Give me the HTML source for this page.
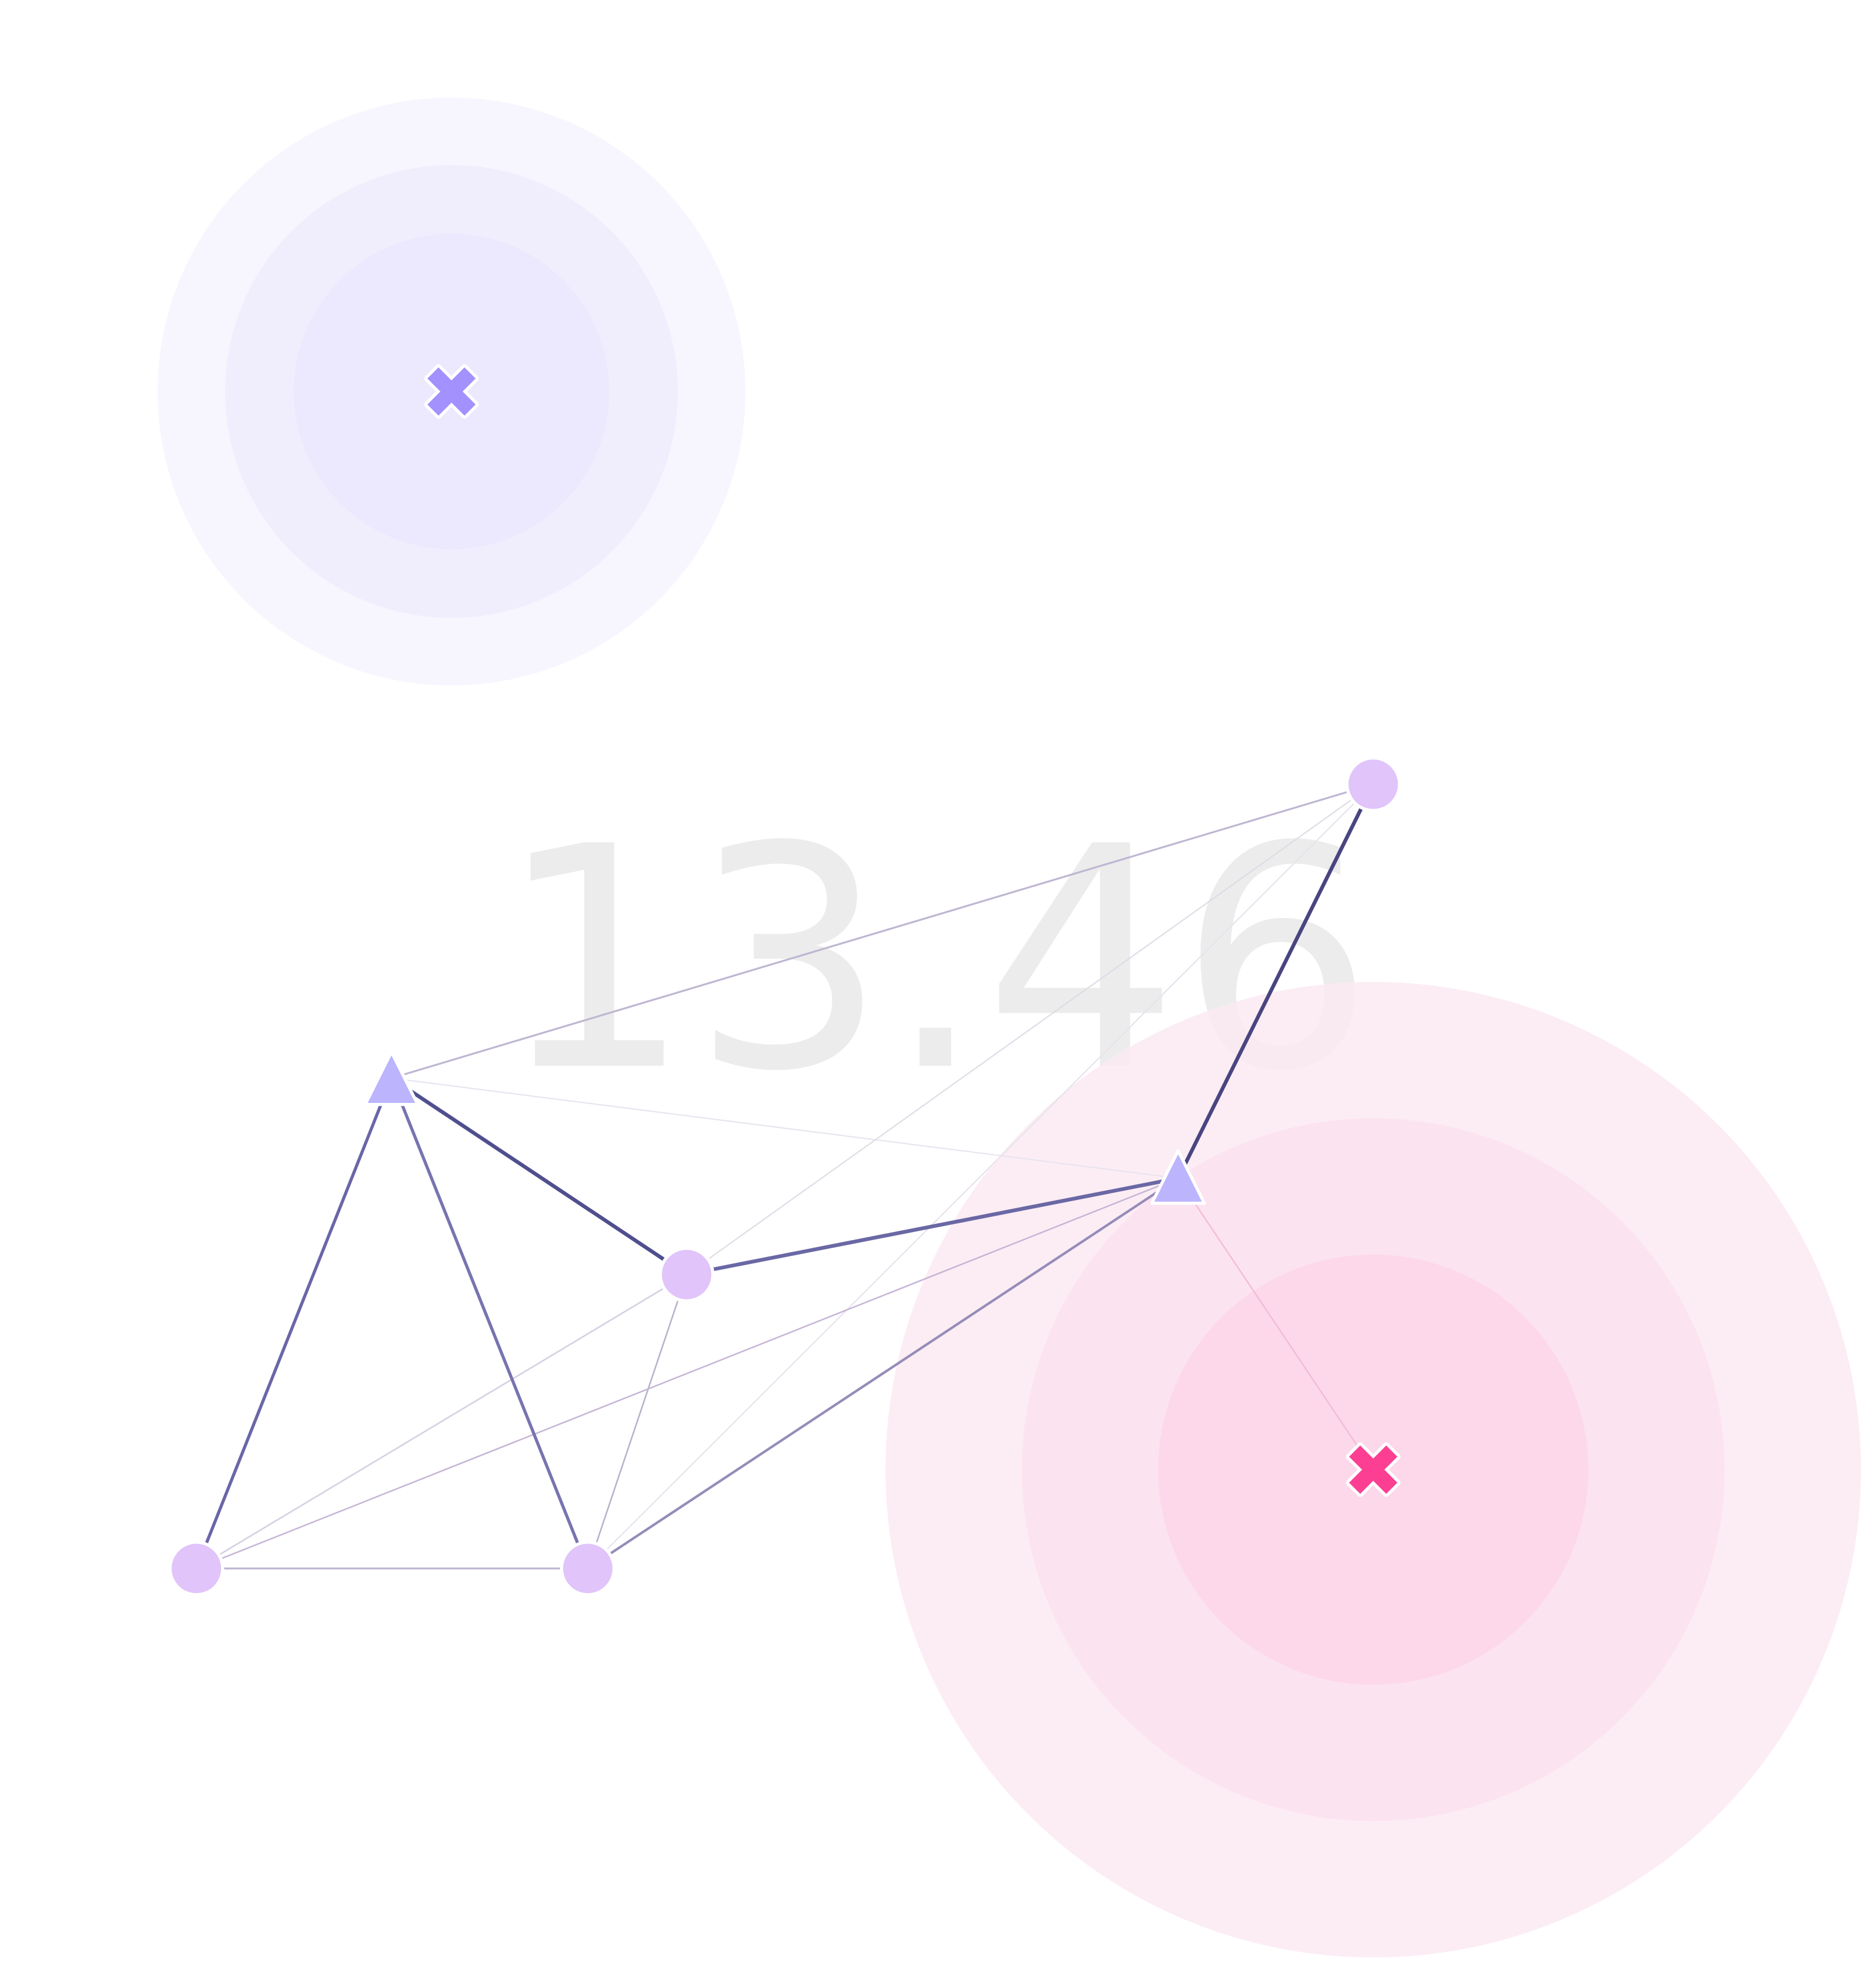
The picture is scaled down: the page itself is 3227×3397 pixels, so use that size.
<!DOCTYPE html>
<html><head><meta charset="utf-8"><style>html,body{margin:0;padding:0;background:#fff;}svg{display:block;}</style></head>
<body>
<svg width="3227" height="3397" viewBox="0 0 1500 1579" xmlns="http://www.w3.org/2000/svg">
<rect width="1500" height="1579" fill="#fff"/>
<circle cx="361" cy="313" r="235" fill="#f7f5fe"/>
<circle cx="361" cy="313" r="181" fill="#f0edfd"/>
<circle cx="361" cy="313" r="126" fill="#ece8fd"/>
<text x="748" y="852" text-anchor="middle" font-family="DejaVu Sans, sans-serif" font-size="245" fill="#ececec">13.46</text>
<circle cx="1098" cy="1175" r="390" fill="#fbeaf3" fill-opacity="0.85"/>
<circle cx="1098" cy="1175" r="281" fill="#fce3f0"/>
<circle cx="1098" cy="1175" r="172" fill="#fcd8ea"/>
<g fill="none" stroke-linecap="round">
<line x1="942" y1="942" x2="313" y2="862" stroke="#e8e4ee" stroke-width="1"/>
<line x1="1098" y1="627" x2="549" y2="1019" stroke="#dedbe6" stroke-width="1"/>
<line x1="1098" y1="627" x2="470" y2="1254" stroke="#e6e2ec" stroke-width="1"/>
<line x1="942" y1="942" x2="1098" y2="1175" stroke="#f2b8d4" stroke-width="1"/>
<line x1="549" y1="1019" x2="157" y2="1254" stroke="#d4cfe0" stroke-width="1.2"/>
<line x1="549" y1="1019" x2="470" y2="1254" stroke="#b9b0cc" stroke-width="1.2"/>
<line x1="942" y1="942" x2="157" y2="1254" stroke="#c6b6d6" stroke-width="1.2"/>
<line x1="1098" y1="627" x2="313" y2="862" stroke="#bfb6d2" stroke-width="1.5"/>
<line x1="157" y1="1254" x2="470" y2="1254" stroke="#bfb6d2" stroke-width="1.5"/>
<line x1="942" y1="942" x2="470" y2="1254" stroke="#968cb8" stroke-width="2"/>
<line x1="313" y1="862" x2="470" y2="1254" stroke="#7874b0" stroke-width="2.5"/>
<line x1="313" y1="862" x2="157" y2="1254" stroke="#6a66a8" stroke-width="2.5"/>
<line x1="942" y1="942" x2="549" y2="1019" stroke="#6a68a4" stroke-width="3"/>
<line x1="313" y1="862" x2="549" y2="1019" stroke="#4f4f8f" stroke-width="3"/>
<line x1="942" y1="942" x2="1098" y2="627" stroke="#4a4580" stroke-width="3"/>
</g>
<g stroke="#fff" stroke-width="2.5">
<circle cx="1098" cy="627" r="21" fill="#e0c4fa"/>
<circle cx="549" cy="1019" r="21" fill="#e0c4fa"/>
<circle cx="157" cy="1254" r="21" fill="#e0c4fa"/>
<circle cx="470" cy="1254" r="21" fill="#e0c4fa"/>
<polygon points="313,841 292,883 334,883" fill="#bcb4fd" stroke-linejoin="round"/>
<polygon points="942,920 921,962 963,962" fill="#bcb4fd" stroke-linejoin="round"/>
</g>
<g transform="translate(361,313) rotate(45)">
<rect x="-21" y="-6.3" width="42" height="12.6" fill="#fff" stroke="#fff" stroke-width="5" stroke-linejoin="round"/>
<rect x="-6.3" y="-21" width="12.6" height="42" fill="#fff" stroke="#fff" stroke-width="5" stroke-linejoin="round"/>
<rect x="-21" y="-6.3" width="42" height="12.6" fill="#a391fd"/>
<rect x="-6.3" y="-21" width="12.6" height="42" fill="#a391fd"/>
</g>
<g transform="translate(1098,1175) rotate(45)">
<rect x="-21" y="-6.3" width="42" height="12.6" fill="#fff" stroke="#fff" stroke-width="5" stroke-linejoin="round"/>
<rect x="-6.3" y="-21" width="12.6" height="42" fill="#fff" stroke="#fff" stroke-width="5" stroke-linejoin="round"/>
<rect x="-21" y="-6.3" width="42" height="12.6" fill="#fc3f93"/>
<rect x="-6.3" y="-21" width="12.6" height="42" fill="#fc3f93"/>
</g>
</svg>
</body></html>
